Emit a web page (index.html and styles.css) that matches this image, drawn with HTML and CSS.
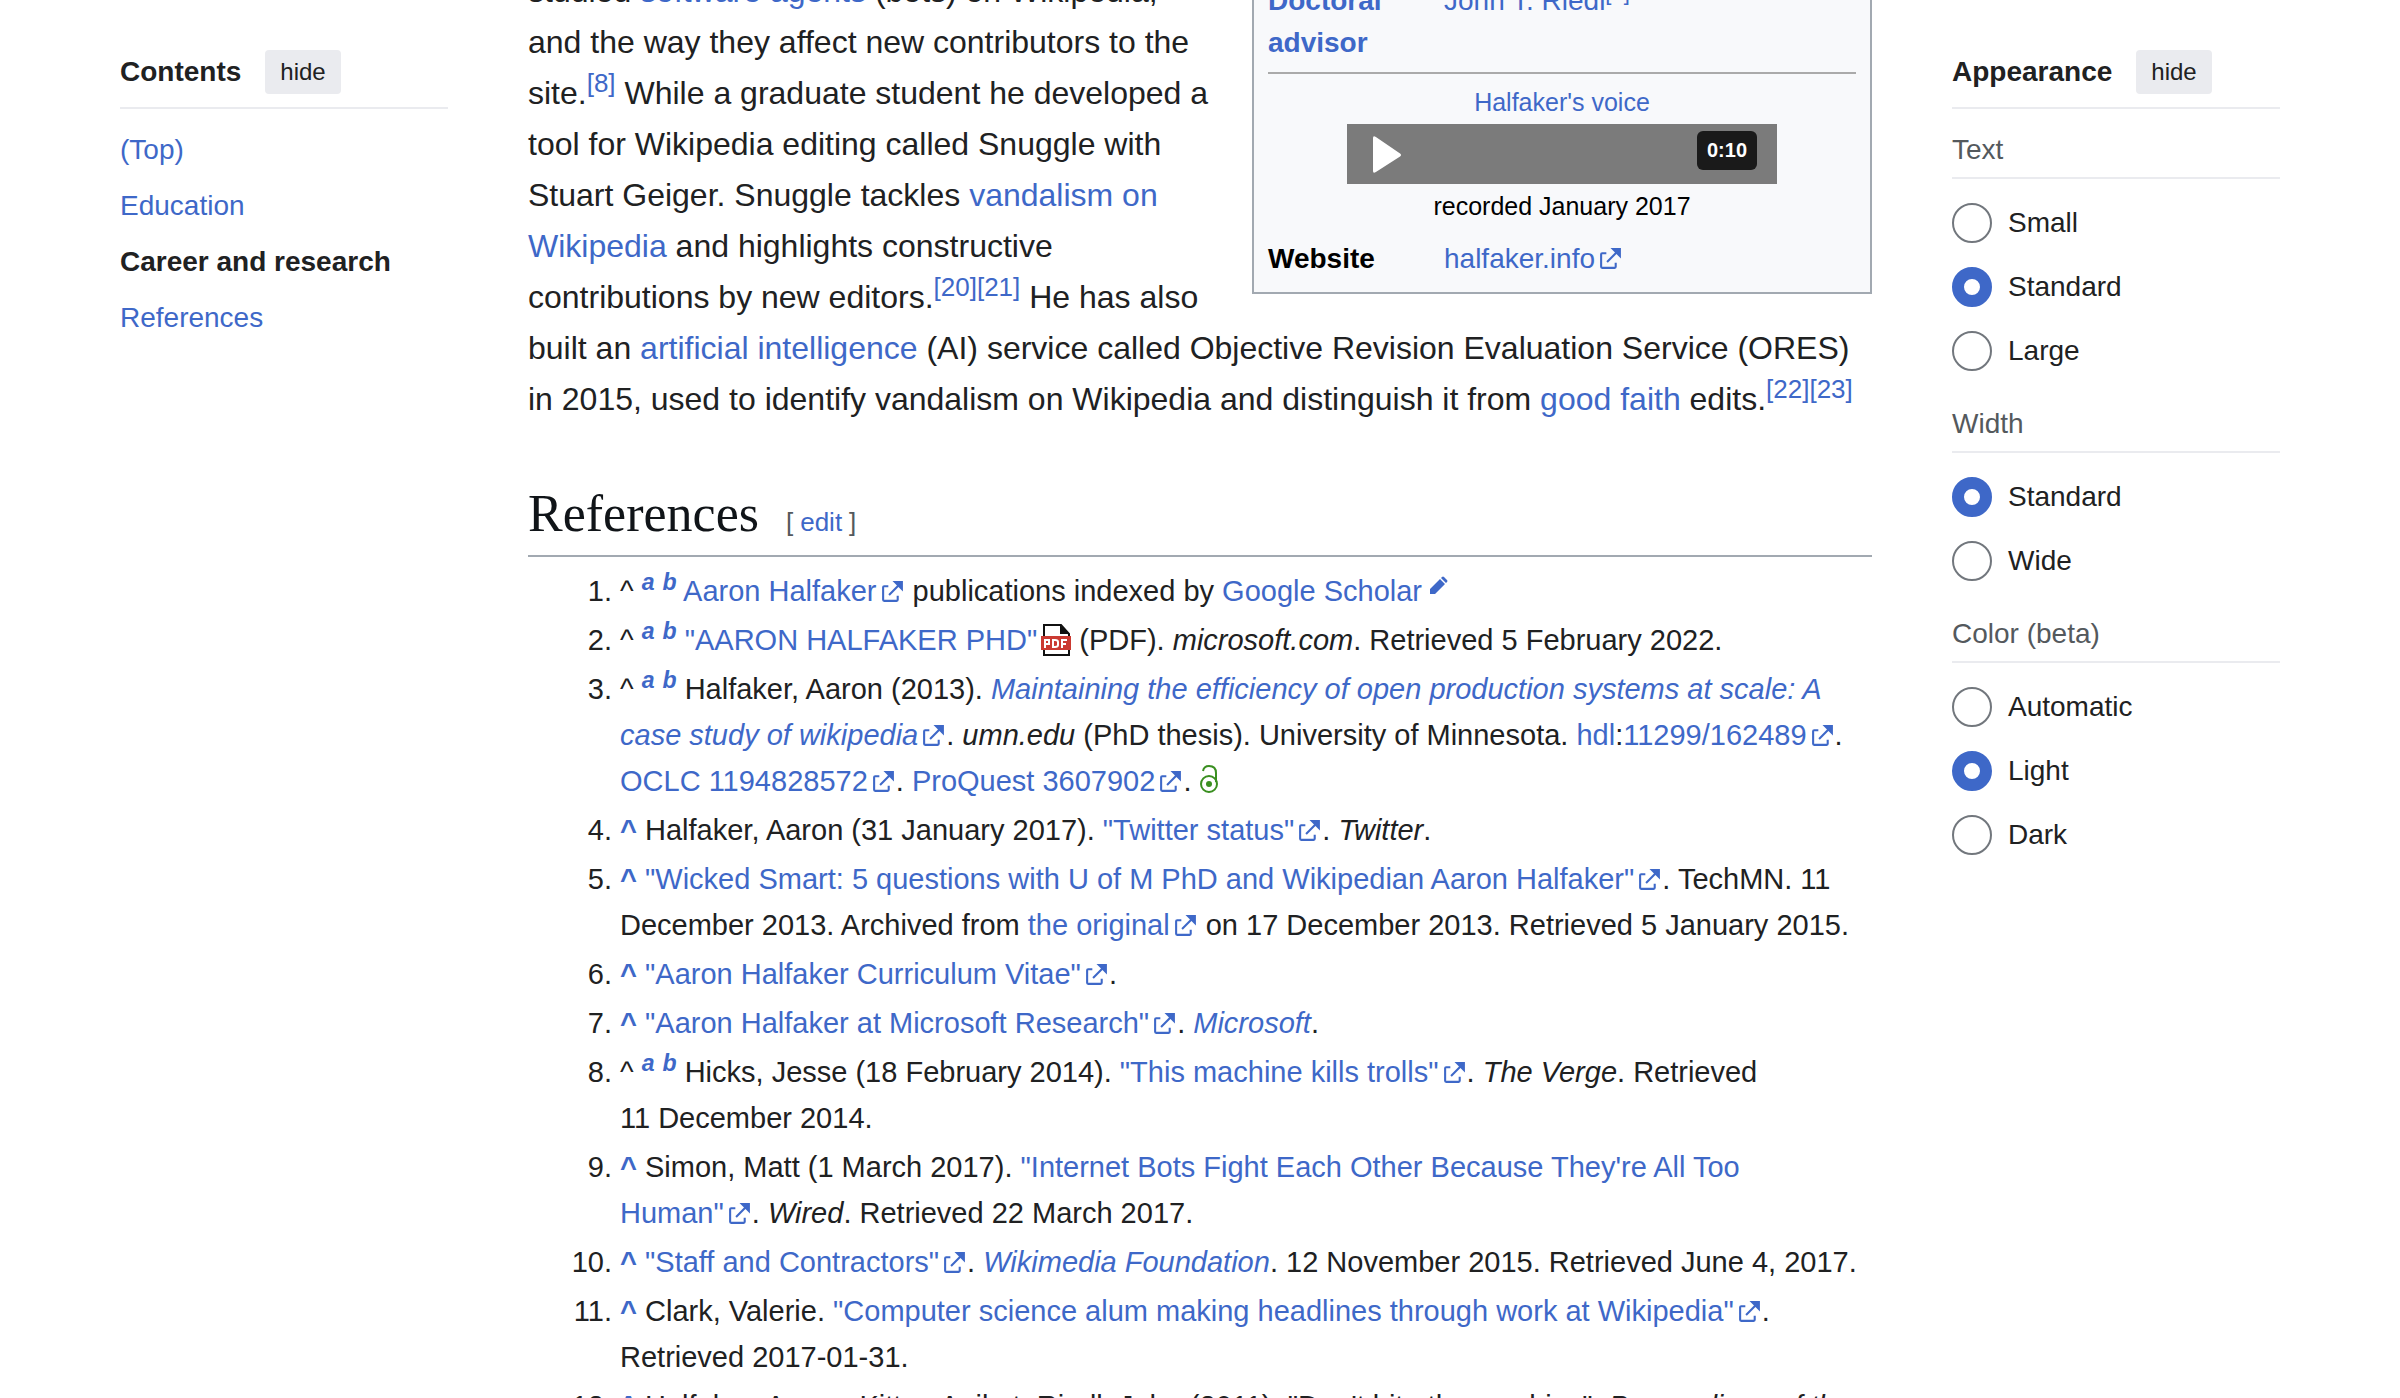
FILE: index.html
```html
<!DOCTYPE html>
<html lang="en">
<head>
<meta charset="utf-8">
<title>Aaron Halfaker - Wikipedia</title>
<link rel="stylesheet" href="styles.css">
</head>
<body>
<svg class="sprite" aria-hidden="true">
  <symbol id="ext" viewBox="0 0 12 12"><path fill="currentColor" d="M6 1h5v5L8.860 3.850 4.700 8 4 7.300l4.150-4.160zM2 3h2v1H2v6h6V8h1v2a1 1 0 0 1-1 1H2a1 1 0 0 1-1-1V4a1 1 0 0 1 1-1"/></symbol>
</svg>
<div class="page">
  <nav class="side" aria-label="Contents">
    <div class="side-head"><h2 class="side-title">Contents</h2><button type="button" class="hide">hide</button></div>
    <ul class="toc">
      <li><a href="#top">(Top)</a></li>
      <li><a href="#education">Education</a></li>
      <li><a class="current" href="#career">Career and research</a></li>
      <li><a href="#references">References</a></li>
    </ul>
  </nav>

  <main class="content">
    <section class="article" id="career">
      <table class="infobox">
        <tr>
          <th scope="row"><a href="#advisor">Doctoral advisor</a></th>
          <td><a href="#riedl">John T. Riedl</a><sup><a href="#n3">[3]</a></sup></td>
        </tr>
        <tr>
          <td colspan="2" class="voice">
            <div class="caption"><a href="#voice">Halfaker's voice</a></div>
            <div class="player">
              <button type="button" class="play" aria-label="Play audio"><svg width="29" height="39" viewBox="0 0 30 40"><path fill="#fff" d="M0 3Q0 0 3 2L28 19Q30 20.500 28 22L3 38Q0 40 0 37Z"/></svg></button>
              <span class="time">0:10</span>
            </div>
            <div class="caption">recorded January 2017</div>
          </td>
        </tr>
        <tr>
          <th scope="row">Website</th>
          <td><a href="#site">halfaker.info<svg class="ext"><use href="#ext"/></svg></a></td>
        </tr>
      </table>
      <p>studied <a href="#agents">software agents</a> (bots) on Wikipedia, and the way they affect new contributors to the <span class="keep">site.<sup><a href="#n8">[8]</a></sup></span> While a graduate student he developed a tool for Wikipedia editing called Snuggle with Stuart Geiger. Snuggle tackles <a href="#vandalism">vandalism on Wikipedia</a> and highlights constructive contributions by new <span class="keep">editors.<sup><a href="#n20">[20]</a><a href="#n21">[21]</a></sup></span> He has also built an <a href="#ai">artificial intelligence</a> (AI) service called Objective Revision Evaluation Service (ORES) in 2015, used to identify vandalism on Wikipedia and distinguish it from <a href="#faith">good faith</a> <span class="keep">edits.<sup><a href="#n22">[22]</a><a href="#n23">[23]</a></sup></span></p>
    </section>

    <section id="references">
      <div class="heading"><h2>References</h2><span class="edit">[<a href="#edit">edit</a>]</span></div>
      <ol class="refs">
        <li>^ <sup class="back"><a href="#a1">a</a></sup> <sup class="back"><a href="#b1">b</a></sup> <a href="#r1">Aaron Halfaker<svg class="ext"><use href="#ext"/></svg></a> publications indexed by <a href="#gs">Google Scholar</a> <a href="#wd" aria-label="Edit this at Wikidata"><svg class="pencil" viewBox="0 0 18 18"><path fill="currentColor" d="M0 18v-5L10 3l5 5L5 18zM11 2l1-1q1-1 2 0l3 3q1 1 0 2l-1 1z"/></svg></a></li>
        <li>^ <sup class="back"><a href="#a2">a</a></sup> <sup class="back"><a href="#b2">b</a></sup> <a href="#r2">"AARON HALFAKER PHD"<svg class="pdf" viewBox="0 0 30 32"><path fill="#fff" stroke="#111" stroke-width="2" d="M3 1h17l8 9v21H3z"/><path fill="#111" d="M19 1l9 9h-9z"/><path fill="#cb3a32" d="M0 12h30v14H0z"/><path fill="none" stroke="#fff" stroke-width="2" d="M4 24v-8h4v4H4M12 16v7h2q3 0 3-2v-3q0-2-3-2zM21 24v-8h5M21 20h4"/></svg></a> (PDF). <i>microsoft.com</i>. Retrieved 5 February 2022.</li>
        <li>^ <sup class="back"><a href="#a3">a</a></sup> <sup class="back"><a href="#b3">b</a></sup> Halfaker, Aaron (2013). <a href="#r3"><i>Maintaining the efficiency of open production systems at scale: A case study of wikipedia</i><svg class="ext"><use href="#ext"/></svg></a>. <i>umn.edu</i> (PhD thesis). University of Minnesota. <a href="#hdl">hdl</a>:<a href="#h3">11299/162489<svg class="ext"><use href="#ext"/></svg></a>. <a href="#oclc">OCLC</a> <a href="#o3">1194828572<svg class="ext"><use href="#ext"/></svg></a>. <a href="#pq">ProQuest</a> <a href="#p3">3607902<svg class="ext"><use href="#ext"/></svg></a>. <svg class="lock" viewBox="0 0 18 28" role="img" aria-label="Open access"><g fill="none" stroke="#3a8f20" stroke-width="2"><path d="M3 6q1-5 6-5 7 0 7 7v9"/><circle cx="9" cy="19" r="8"/></g><circle cx="9" cy="19" r="3" fill="#3a8f20"/></svg></li>
        <li><a class="up" href="#c4">^</a> Halfaker, Aaron (31 January 2017). <a href="#r4">"Twitter status"<svg class="ext"><use href="#ext"/></svg></a>. <i>Twitter</i>.</li>
        <li><a class="up" href="#c5">^</a> <a href="#r5">"Wicked Smart: 5 questions with U of M PhD and Wikipedian Aaron Halfaker"<svg class="ext"><use href="#ext"/></svg></a>. TechMN. 11 December 2013. Archived from <a href="#o5">the original<svg class="ext"><use href="#ext"/></svg></a> on 17 December 2013. Retrieved 5 January 2015.</li>
        <li><a class="up" href="#c6">^</a> <a href="#r6">"Aaron Halfaker Curriculum Vitae"<svg class="ext"><use href="#ext"/></svg></a>.</li>
        <li><a class="up" href="#c7">^</a> <a href="#r7">"Aaron Halfaker at Microsoft Research"<svg class="ext"><use href="#ext"/></svg></a>. <a href="#ms"><i>Microsoft</i></a>.</li>
        <li>^ <sup class="back"><a href="#a8">a</a></sup> <sup class="back"><a href="#b8">b</a></sup> Hicks, Jesse (18 February 2014). <a href="#r8">"This machine kills trolls"<svg class="ext"><use href="#ext"/></svg></a>. <i>The Verge</i>. Retrieved <span class="keep">11 December 2014</span>.</li>
        <li><a class="up" href="#c9">^</a> Simon, Matt (1 March 2017). <a href="#r9">"Internet Bots Fight Each Other Because They're All Too <span class="keep">Human"<svg class="ext"><use href="#ext"/></svg></span></a>. <i>Wired</i>. Retrieved 22 March 2017.</li>
        <li><a class="up" href="#c10">^</a> <a href="#r10">"Staff and Contractors"<svg class="ext"><use href="#ext"/></svg></a>. <a href="#wmf"><i>Wikimedia Foundation</i></a>. 12 November 2015. Retrieved June 4, 2017.</li>
        <li><a class="up" href="#c11">^</a> Clark, Valerie. <a href="#r11">"Computer science alum making headlines through work at Wikipedia"<svg class="ext"><use href="#ext"/></svg></a>. Retrieved 2017-01-31.</li>
        <li><a class="up" href="#c12">^</a> Halfaker, Aaron; Kittur, Aniket; Riedl, John (2011). "Don't bite the newbies". <i>Proceedings of the</i></li>
      </ol>
    </section>
  </main>

  <aside class="side" aria-label="Appearance">
    <div class="side-head"><h2 class="side-title">Appearance</h2><button type="button" class="hide">hide</button></div>
    <div class="group" role="radiogroup" aria-labelledby="g-text">
      <h3 id="g-text">Text</h3>
      <label><input type="radio" name="text">Small</label>
      <label><input type="radio" name="text" checked>Standard</label>
      <label><input type="radio" name="text">Large</label>
    </div>
    <div class="group" role="radiogroup" aria-labelledby="g-width">
      <h3 id="g-width">Width</h3>
      <label><input type="radio" name="width" checked>Standard</label>
      <label><input type="radio" name="width">Wide</label>
    </div>
    <div class="group" role="radiogroup" aria-labelledby="g-color">
      <h3 id="g-color">Color (beta)</h3>
      <label><input type="radio" name="color">Automatic</label>
      <label><input type="radio" name="color" checked>Light</label>
      <label><input type="radio" name="color">Dark</label>
    </div>
  </aside>
</div>
</body>
</html>
```
FILE: styles.css
```css
* { box-sizing: border-box; }
body {
  margin: 0;
  height: 100vh;
  overflow: hidden;
  background: #fff;
  color: #202122;
  font: 28px/44px "Liberation Sans", Arial, sans-serif;
}
h2, h3, p, ul, ol { margin: 0; padding: 0; font-weight: normal; }
a { color: #3e68c8; text-decoration: none; }
sup { line-height: 1; }
.sprite { display: block; width: 0; height: 0; }
.keep { white-space: nowrap; }
.page {
  display: grid;
  grid-template-columns: 328px minmax(0, 1fr) 328px;
  gap: 80px;
  padding: 0 120px;
}

/* Side panels */
.side { padding-top: 50px; }
.side-head {
  display: flex;
  align-items: center;
  gap: 24px;
  padding-bottom: 13px;
  border-bottom: 2px solid #eaebef;
}
.side-title { font-size: 28px; font-weight: bold; }
.hide {
  height: 44px;
  padding: 0 15px;
  border: 0;
  border-radius: 4px;
  background: #eaebef;
  color: #202122;
  font: 24px/44px "Liberation Sans", Arial, sans-serif;
}
.toc { display: grid; gap: 12px; padding-top: 19px; list-style: none; }
.toc .current { color: #202122; font-weight: bold; }
.group { display: grid; gap: 24px; padding-top: 19px; }
.group + .group { padding-top: 31px; }
.group h3 {
  padding-bottom: 5px;
  border-bottom: 2px solid #eaebef;
  color: #54595d;
  font-size: 28px;
}
.group label { display: flex; align-items: center; gap: 16px; height: 40px; }
.group input {
  appearance: none;
  width: 40px;
  height: 40px;
  margin: 0;
  border: 2px solid #72777d;
  border-radius: 50%;
  background: #fff;
}
.group input:checked { border: 12px solid #3e68c8; }

/* Article text */
.article { margin-top: -34px; font-size: 32px; line-height: 51px; }
.article p sup { font-size: 26px; }

/* Infobox */
.infobox {
  float: right;
  width: 620px;
  margin: 0 0 14px 36px;
  padding: 12px 14px;
  border: 2px solid #a2a9b1;
  border-spacing: 0;
  background: #f8f9fb;
  color: #000;
  font-size: 28px;
  line-height: 42px;
}
.infobox th, .infobox td { padding: 0; text-align: left; vertical-align: top; }
.infobox th { width: 176px; padding-right: 20px; }
.infobox tr:first-child > * { padding-bottom: 8px; }
.infobox sup { font-size: 22px; }
.infobox .voice { padding: 8px 0 12px; border-top: 2px solid #aaa; text-align: center; }
.caption { font-size: 25px; line-height: 40px; }
.player {
  display: flex;
  justify-content: space-between;
  align-items: flex-start;
  width: 430px;
  height: 60px;
  margin: 2px auto;
  padding: 7px 20px 0 26px;
  background: #7b7b7b;
}
.play { display: flex; padding: 4px 0 0; border: 0; background: none; }
.time {
  padding: 0 10px;
  border-radius: 6px;
  background: #1a1a1a;
  color: #fff;
  font-size: 20px;
  font-weight: bold;
  line-height: 39px;
}

/* References */
.heading {
  display: flex;
  align-items: baseline;
  gap: 27px;
  margin-top: 54px;
  padding-bottom: 6px;
  border-bottom: 2px solid #a2a9b1;
}
.heading h2 { color: #101418; font: 52px/70px "Liberation Serif", Georgia, serif; }
.edit { display: flex; gap: 7px; color: #54595d; font-size: 26px; }
.refs { padding: 11px 0 0 92px; font-size: 29px; line-height: 46px; }
.refs li { margin-bottom: 3px; }
.back { font-size: 23px; font-weight: bold; font-style: italic; }
.up { font-weight: bold; }
.ext { width: 25px; height: 25px; margin-left: 3px; vertical-align: -3px; }
.pdf { width: 30px; height: 32px; margin-left: 4px; vertical-align: -6px; }
.pencil { width: 18px; height: 18px; vertical-align: 7px; }
.lock { width: 18px; height: 28px; vertical-align: -2px; }
```
